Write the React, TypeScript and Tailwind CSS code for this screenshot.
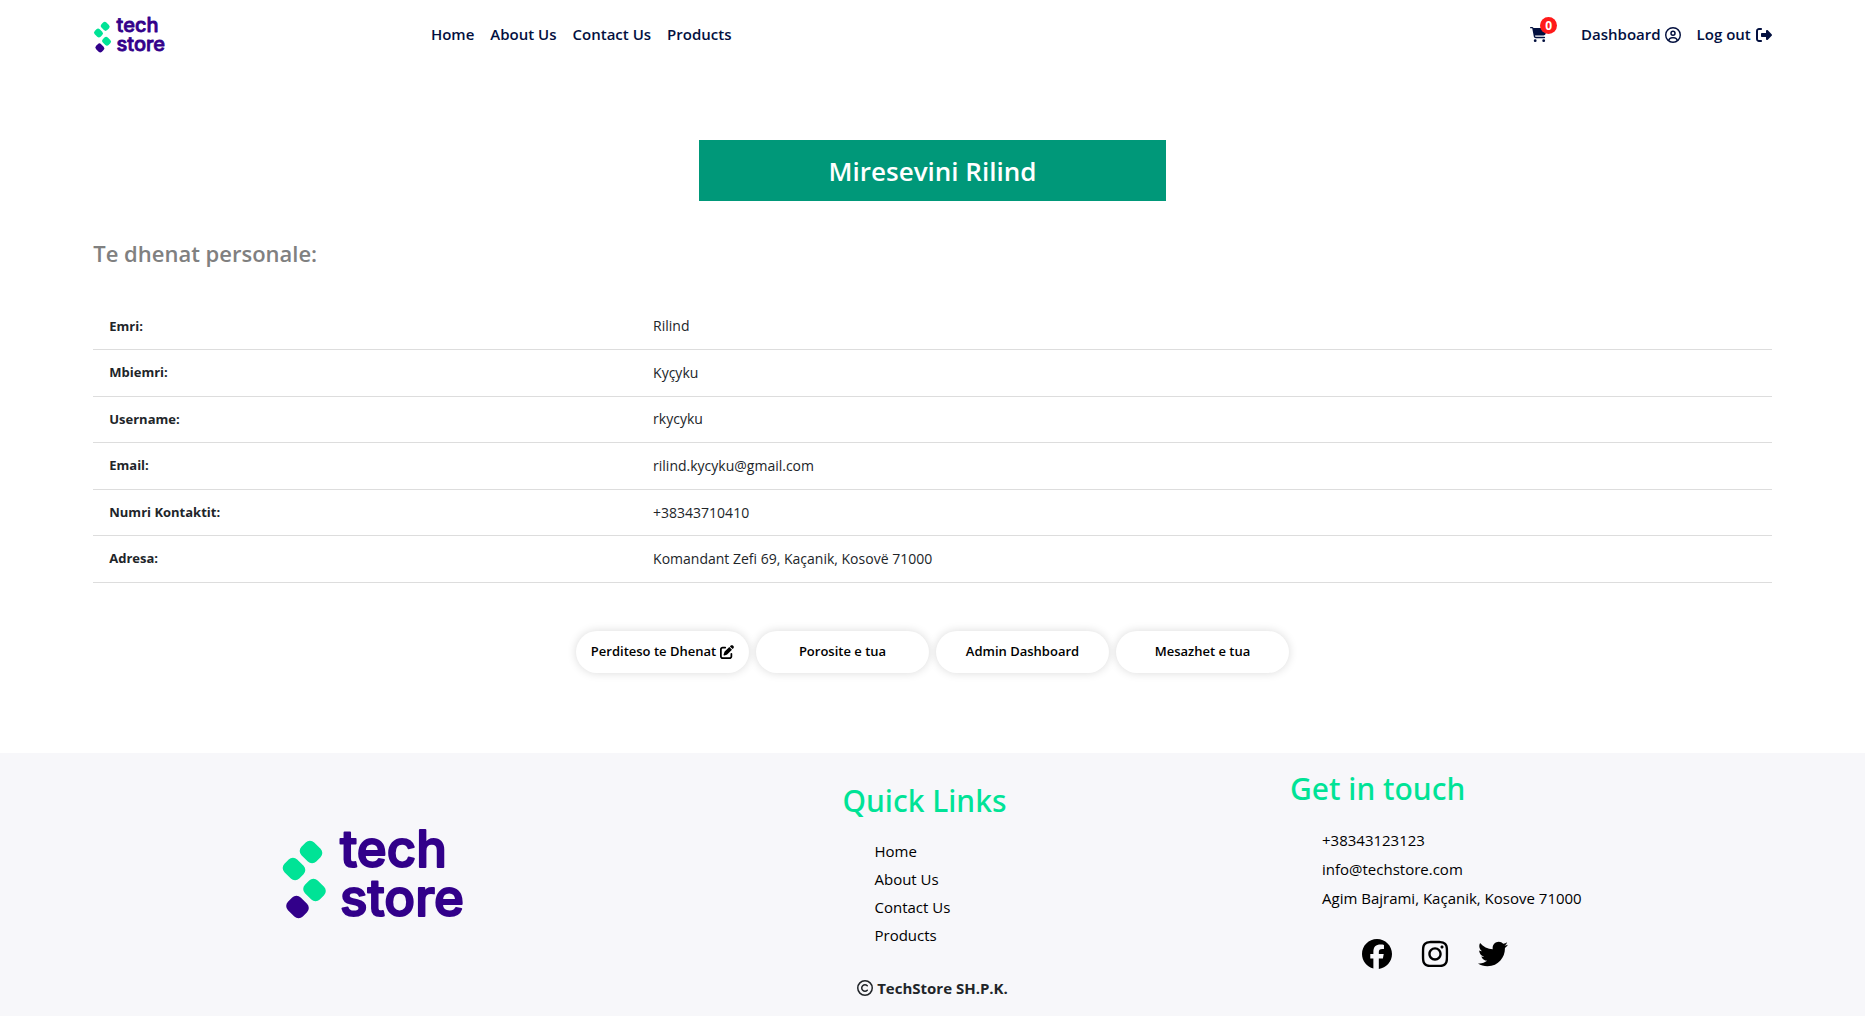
import {
  FaCartShopping,
  FaRegCircleUser,
  FaRightFromBracket,
  FaPenToSquare,
  FaRegCopyright,
  FaFacebook,
  FaInstagram,
  FaTwitter,
} from "react-icons/fa6";

const links = ["Home", "About Us", "Contact Us", "Products"];

const details = [
  ["Emri:", "Rilind"],
  ["Mbiemri:", "Kyçyku"],
  ["Username:", "rkycyku"],
  ["Email:", "rilind.kycyku@gmail.com"],
  ["Numri Kontaktit:", "+38343710410"],
  ["Adresa:", "Komandant Zefi 69, Kaçanik, Kosovë 71000"],
];

function Logo({ className }: { className: string }) {
  return (
    <svg viewBox="0 -10 186 112" className={className} role="img" aria-label="tech store">
      <g fill="#00e396">
        <rect x="-10.5" y="-9" width="21" height="18" rx="6" transform="translate(31 24) rotate(45)" />
        <rect x="-10.5" y="-9" width="21" height="18" rx="6" transform="translate(14 41) rotate(45)" />
        <rect x="-10.5" y="-9" width="21" height="18" rx="6" transform="translate(34.5 62) rotate(45)" />
      </g>
      <rect x="-10.5" y="-9" width="21" height="18" rx="6" fill="#32008a" transform="translate(17.5 79) rotate(45)" />
      <g
        fill="#32008a"
        stroke="#32008a"
        strokeWidth="2"
        strokeLinejoin="round"
        fontFamily="Inter, sans-serif"
        fontWeight="500"
        fontSize="51"
      >
        <text x="60" y="39">tech</text>
        <text x="60" y="88">store</text>
      </g>
    </svg>
  );
}

function PillButton({ children }: { children: React.ReactNode }) {
  return (
    <button className="flex h-[42px] w-[173px] items-center justify-center gap-1 rounded-full bg-white text-[13px] font-semibold text-black shadow-[0_0_10px_rgba(0,0,0,0.15)]">
      {children}
    </button>
  );
}

export default function App() {
  return (
    <div className="flex min-h-screen flex-col bg-white font-['Open_Sans','Noto_Sans',sans-serif] text-[#212529]">
      <header className="flex h-[69px] items-center px-[5%] text-[15px] font-semibold text-[#03103f]">
        <a href="#" className="w-[20%]">
          <Logo className="h-11 w-[73px]" />
        </a>
        <nav className="ml-0.5 flex gap-4">
          {links.map((l) => (
            <a key={l} href="#">{l}</a>
          ))}
        </nav>
        <div className="ml-auto flex items-center gap-4">
          <a href="#" aria-label="Cart" className="relative mr-[18px]">
            <FaCartShopping className="size-[17px]" />
            <span className="absolute -top-[9px] left-2.5 flex size-[17px] items-center justify-center rounded-full bg-[#ff1a1a] text-xs font-bold text-white">
              0
            </span>
          </a>
          <a href="#" className="flex items-center gap-1">
            Dashboard <FaRegCircleUser className="size-4" />
          </a>
          <a href="#" className="flex items-center gap-[5px]">
            Log out <FaRightFromBracket className="size-4" />
          </a>
        </div>
      </header>

      <main className="grow px-[5%] pb-[78px]">
        <h1 className="mx-auto mt-[71px] flex h-[61px] w-[467px] items-center justify-center bg-[#009879] pt-0.5 text-[26px] font-semibold text-white">
          Miresevini Rilind
        </h1>
        <h2 className="mt-9 text-[22px] leading-8 font-semibold text-[#808080]">Te dhenat personale:</h2>
        <table className="mt-[35px] h-[279px] w-full table-fixed">
          <tbody>
            {details.map(([k, v]) => (
              <tr key={k} className="border-b border-[#dddddd]">
                <th scope="row" className="w-[32.4%] px-4 text-left text-[13px] font-bold">{k}</th>
                <td className="px-4 text-sm">{v}</td>
              </tr>
            ))}
          </tbody>
        </table>
        <div className="mt-12 flex justify-center gap-[7px]">
          <PillButton>
            Perditeso te Dhenat <FaPenToSquare className="size-3.5" />
          </PillButton>
          <PillButton>Porosite e tua</PillButton>
          <PillButton>Admin Dashboard</PillButton>
          <PillButton>Mesazhet e tua</PillButton>
        </div>
      </main>

      <footer className="grid h-[263px] grid-cols-[40%_1fr_40%] bg-[#f7f7fa] text-[15px] text-black">
        <div className="flex justify-center pt-[65px]">
          <Logo className="h-28 w-[186px]" />
        </div>
        <div className="flex flex-col items-center pt-7">
          <div className="pr-4">
            <h2 className="font-['Noto_Sans',sans-serif] text-[30px] leading-10 font-medium text-[#00e396]">Quick Links</h2>
            <ul className="mt-4 pl-8 leading-7">
              {links.map((l) => (
                <li key={l}>
                  <a href="#">{l}</a>
                </li>
              ))}
            </ul>
          </div>
          <p className="mt-[27px] flex items-center gap-1 leading-6 font-bold text-[#212529]">
            <FaRegCopyright className="size-4" /> TechStore SH.P.K.
          </p>
        </div>
        <div className="pt-4 pl-[171px]">
          <h2 className="font-['Noto_Sans',sans-serif] text-[30px] leading-10 font-medium text-[#00e396]">Get in touch</h2>
          <ul className="mt-[17px] pl-8 leading-[29px]">
            <li><a href="#">+38343123123</a></li>
            <li><a href="#">info@techstore.com</a></li>
            <li><a href="#">Agim Bajrami, Kaçanik, Kosove 71000</a></li>
          </ul>
          <div className="mt-[26px] flex gap-7 pl-[72px]">
            <a href="#" aria-label="Facebook"><FaFacebook className="size-[30px]" /></a>
            <a href="#" aria-label="Instagram"><FaInstagram className="size-[30px]" /></a>
            <a href="#" aria-label="Twitter"><FaTwitter className="size-[30px]" /></a>
          </div>
        </div>
      </footer>
    </div>
  );
}
